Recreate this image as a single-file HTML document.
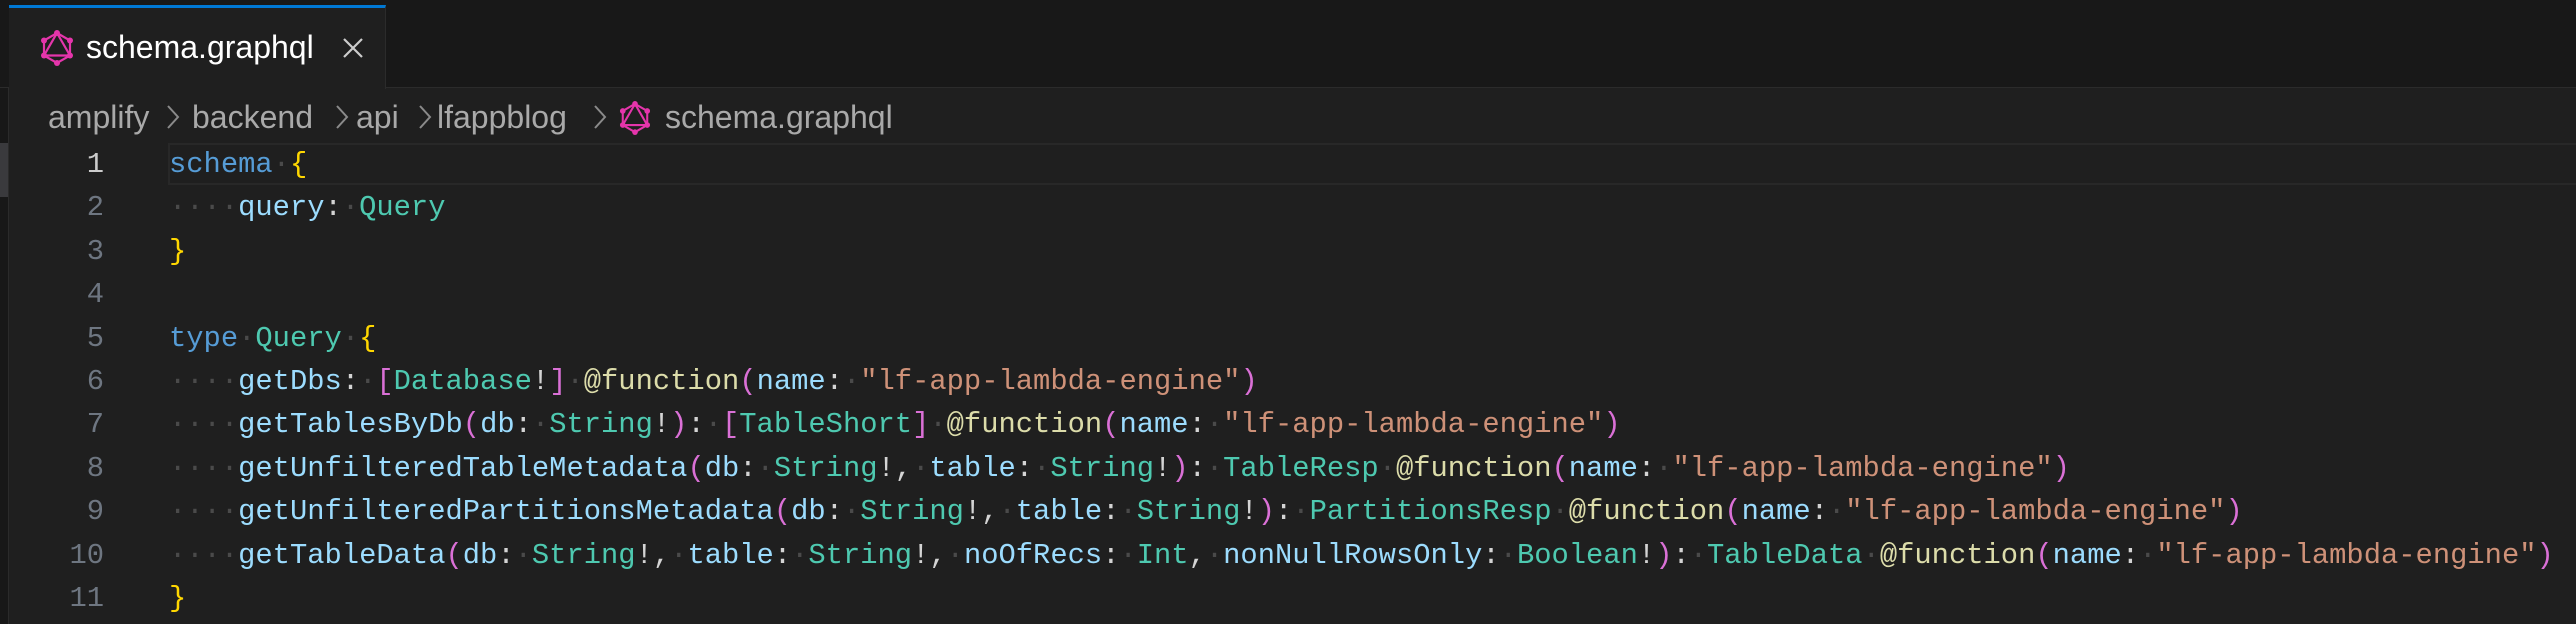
<!DOCTYPE html>
<html><head><meta charset="utf-8"><style>
html,body{margin:0;padding:0}
body{width:2576px;height:624px;background:#1f1f1f;position:relative;overflow:hidden;font-family:"Liberation Sans",sans-serif}
.tabbar{position:absolute;left:0;top:0;width:2576px;height:88px;background:#181818;border-bottom:1px solid #2b2b2b;box-sizing:border-box}
.tab{position:absolute;left:9px;top:5px;width:377px;height:84px;background:#1f1f1f;border-top:3px solid #0078d4;border-right:1px solid #2b2b2b;box-sizing:border-box}
.abs{position:absolute;white-space:pre}
.bc{color:#a9a9a9;font-size:32px;top:98px;line-height:38px}
.leftstrip{position:absolute;left:0;top:88px;width:8px;height:536px;background:#181818;border-right:1px solid #2b2b2b}
.code{position:absolute;left:169px;font-family:"Liberation Mono","DejaVu Sans Mono",monospace;font-size:28.8px;white-space:pre;color:#d4d4d4;line-height:43.4px}
.ln{position:absolute;left:0;width:104px;text-align:right;font-family:"Liberation Mono",monospace;font-size:28.8px;color:#6e7681;line-height:43.4px;white-space:pre}
.d{color:#4a4a4a}
.k{color:#569cd6}.t{color:#4ec9b0}.p{color:#9cdcfe}.s{color:#ce9178}.f{color:#dcdcaa}.y{color:#ffd700}.m{color:#da70d6}
.hl{position:absolute;left:168px;top:143px;width:2420px;height:42px;border:2px solid #282828;box-sizing:border-box}
</style></head><body>
<div class="tabbar"></div>
<div class="tab"></div>
<svg class="abs" style="left:40px;top:30px" width="34" height="36" viewBox="0 0 34 36">
<g stroke="#e535ab" stroke-width="2.2" fill="none"><polygon points="17,3 30,10.5 30,25.5 17,33 4,25.5 4,10.5"/><polygon points="17,3 30,25.5 4,25.5"/></g>
<g fill="#e535ab"><circle cx="17" cy="3" r="3"/><circle cx="30" cy="10.5" r="3"/><circle cx="30" cy="25.5" r="3"/><circle cx="17" cy="33" r="3"/><circle cx="4" cy="25.5" r="3"/><circle cx="4" cy="10.5" r="3"/></g></svg>
<div class="abs" style="left:86px;top:28px;font-size:32px;line-height:38px;color:#ffffff">schema.graphql</div>
<svg class="abs" style="left:342px;top:37px" width="22" height="22" viewBox="0 0 22 22"><path d="M2 2L20 20M20 2L2 20" stroke="#cccccc" stroke-width="2.2"/></svg>
<div class="leftstrip"></div>
<div class="abs" style="left:0;top:143px;width:8px;height:54px;background:#3a3a3d"></div>
<div class="abs bc" style="left:48px">amplify</div>
<svg class="abs" style="left:166px;top:104px" width="14" height="26" viewBox="0 0 14 26"><path d="M2 2L12 13L2 24" stroke="#8a8a8a" stroke-width="2" fill="none"/></svg>
<div class="abs bc" style="left:192px">backend</div>
<svg class="abs" style="left:335px;top:104px" width="14" height="26" viewBox="0 0 14 26"><path d="M2 2L12 13L2 24" stroke="#8a8a8a" stroke-width="2" fill="none"/></svg>
<div class="abs bc" style="left:356px">api</div>
<svg class="abs" style="left:418px;top:104px" width="14" height="26" viewBox="0 0 14 26"><path d="M2 2L12 13L2 24" stroke="#8a8a8a" stroke-width="2" fill="none"/></svg>
<div class="abs bc" style="left:437px">lfappblog</div>
<svg class="abs" style="left:593px;top:104px" width="14" height="26" viewBox="0 0 14 26"><path d="M2 2L12 13L2 24" stroke="#8a8a8a" stroke-width="2" fill="none"/></svg>
<svg class="abs" style="left:619px;top:101px" width="32" height="34" viewBox="0 0 34 36">
<g stroke="#e535ab" stroke-width="2.2" fill="none"><polygon points="17,3 30,10.5 30,25.5 17,33 4,25.5 4,10.5"/><polygon points="17,3 30,25.5 4,25.5"/></g>
<g fill="#e535ab"><circle cx="17" cy="3" r="3"/><circle cx="30" cy="10.5" r="3"/><circle cx="30" cy="25.5" r="3"/><circle cx="17" cy="33" r="3"/><circle cx="4" cy="25.5" r="3"/><circle cx="4" cy="10.5" r="3"/></g></svg>
<div class="abs bc" style="left:665px">schema.graphql</div>
<div class="hl"></div>
<div class="ln" style="top:143px"><span style="color:#cccccc">1</span>
2
3
4
5
6
7
8
9
10
11</div>
<div class="code" style="top:143px"><span class="k">schema</span><span class="d">·</span><span class="y">{</span>
<span class="d">····</span><span class="p">query</span>:<span class="d">·</span><span class="t">Query</span>
<span class="y">}</span>

<span class="k">type</span><span class="d">·</span><span class="t">Query</span><span class="d">·</span><span class="y">{</span>
<span class="d">····</span><span class="p">getDbs</span>:<span class="d">·</span><span class="m">[</span><span class="t">Database</span>!<span class="m">]</span><span class="d">·</span><span class="f">@function</span><span class="m">(</span><span class="p">name</span>:<span class="d">·</span><span class="s">"lf-app-lambda-engine"</span><span class="m">)</span>
<span class="d">····</span><span class="p">getTablesByDb</span><span class="m">(</span><span class="p">db</span>:<span class="d">·</span><span class="t">String</span>!<span class="m">)</span>:<span class="d">·</span><span class="m">[</span><span class="t">TableShort</span><span class="m">]</span><span class="d">·</span><span class="f">@function</span><span class="m">(</span><span class="p">name</span>:<span class="d">·</span><span class="s">"lf-app-lambda-engine"</span><span class="m">)</span>
<span class="d">····</span><span class="p">getUnfilteredTableMetadata</span><span class="m">(</span><span class="p">db</span>:<span class="d">·</span><span class="t">String</span>!,<span class="d">·</span><span class="p">table</span>:<span class="d">·</span><span class="t">String</span>!<span class="m">)</span>:<span class="d">·</span><span class="t">TableResp</span><span class="d">·</span><span class="f">@function</span><span class="m">(</span><span class="p">name</span>:<span class="d">·</span><span class="s">"lf-app-lambda-engine"</span><span class="m">)</span>
<span class="d">····</span><span class="p">getUnfilteredPartitionsMetadata</span><span class="m">(</span><span class="p">db</span>:<span class="d">·</span><span class="t">String</span>!,<span class="d">·</span><span class="p">table</span>:<span class="d">·</span><span class="t">String</span>!<span class="m">)</span>:<span class="d">·</span><span class="t">PartitionsResp</span><span class="d">·</span><span class="f">@function</span><span class="m">(</span><span class="p">name</span>:<span class="d">·</span><span class="s">"lf-app-lambda-engine"</span><span class="m">)</span>
<span class="d">····</span><span class="p">getTableData</span><span class="m">(</span><span class="p">db</span>:<span class="d">·</span><span class="t">String</span>!,<span class="d">·</span><span class="p">table</span>:<span class="d">·</span><span class="t">String</span>!,<span class="d">·</span><span class="p">noOfRecs</span>:<span class="d">·</span><span class="t">Int</span>,<span class="d">·</span><span class="p">nonNullRowsOnly</span>:<span class="d">·</span><span class="t">Boolean</span>!<span class="m">)</span>:<span class="d">·</span><span class="t">TableData</span><span class="d">·</span><span class="f">@function</span><span class="m">(</span><span class="p">name</span>:<span class="d">·</span><span class="s">"lf-app-lambda-engine"</span><span class="m">)</span>
<span class="y">}</span></div>
</body></html>
